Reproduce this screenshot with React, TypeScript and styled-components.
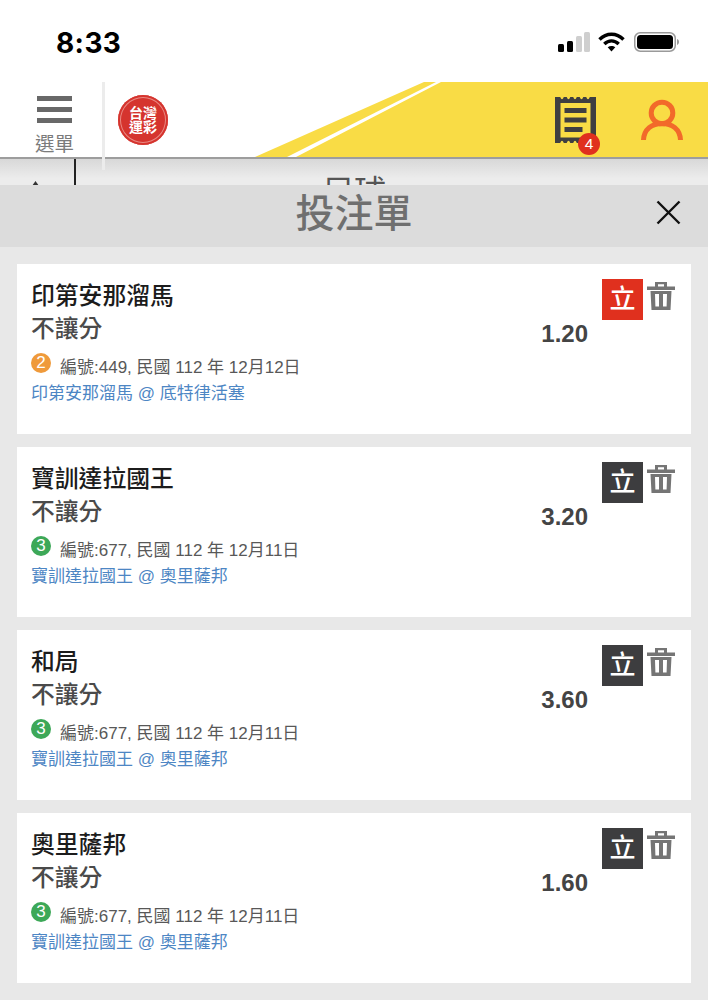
import React from "react";
import styled, { createGlobalStyle } from "styled-components";

const CJK = `"Liberation Sans", "Noto Sans CJK TC", sans-serif`;

const Global = createGlobalStyle`
  html, body { margin: 0; padding: 0; background: #e8e8e8; overflow: hidden; }
  * { box-sizing: border-box; }
  body { font-family: ${CJK}; }
`;

const Page = styled.div`
  width: 708px;
  height: 1000px;
  display: flex;
  flex-direction: column;
  position: relative;
  overflow: hidden;
`;

const StatusBar = styled.div`
  height: 82px;
  background: #fff;
  display: flex;
  justify-content: space-between;
  align-items: flex-start;
  padding: 26px 29px 0 56px;
`;

const Clock = styled.span`
  font-family: Inter, sans-serif;
  font-weight: 700;
  font-size: 28px;
  line-height: 34px;
  color: #000;
  letter-spacing: 0.4px;
`;

const StatusIcons = styled.div`
  display: flex;
  align-items: center;
  gap: 8px;
  margin-top: 6px;
`;

const Header = styled.header`
  height: 77px;
  background: #fff;
  border-bottom: 2px solid #9d9d9d;
  display: flex;
  align-items: flex-start;
  position: relative;
`;

const HeaderArt = styled.svg`
  position: absolute;
  left: 0;
  top: 0;
`;

const MenuButton = styled.div`
  width: 103px;
  display: flex;
  flex-direction: column;
  align-items: center;
  padding: 14px 0 0 6px;
  position: relative;
`;

const MenuBars = styled.div`
  width: 35px;
  display: flex;
  flex-direction: column;
  gap: 6.5px;
`;

const MenuBar = styled.span`
  height: 4.5px;
  background: #686868;
`;

const MenuLabel = styled.span`
  font-size: 19.5px;
  line-height: 24px;
  color: #7b7b7b;
  margin-top: 9px;
  white-space: nowrap;
`;

const Divider = styled.div`
  position: absolute;
  left: 102px;
  top: 0;
  width: 3px;
  height: 88px;
  background: #ececec;
  z-index: 2;
`;

const Logo = styled.div`
  width: 50px;
  height: 50px;
  margin: 13px 0 0 15px;
  border-radius: 50%;
  background: #d5342e;
  box-shadow: inset 0 0 0 2px #d5342e, inset 0 0 0 3px #e98a84;
  display: grid;
  grid-template-columns: 14px 14px;
  grid-auto-rows: 14px;
  justify-content: center;
  align-content: center;
  position: relative;
  color: #fff;
  font-size: 14px;
  font-weight: 700;
  line-height: 14px;
  text-align: center;
`;

const HeaderActions = styled.div`
  margin-left: auto;
  display: flex;
  align-items: flex-start;
  position: relative;
  padding: 15px 24px 0 0;
  gap: 44px;
`;

const ReceiptWrap = styled.div`
  position: relative;
  width: 41px;
  height: 46px;
`;

const Badge = styled.span`
  position: absolute;
  left: 23px;
  top: 36px;
  width: 22px;
  height: 22px;
  border-radius: 50%;
  background: #e0301e;
  color: #fff;
  font-size: 15.5px;
  line-height: 22px;
  text-align: center;
`;

const Backdrop = styled.div`
  height: 26px;
  overflow: hidden;
  position: relative;
  background: linear-gradient(#d8d8d8, #ececec 75%);
  display: flex;
  align-items: flex-start;
`;

const BackArrow = styled.span`
  width: 76px;
  height: 26px;
  border-right: 2px solid #222;
  padding: 22px 0 0 32px;
  display: flex;
`;

const BackdropTitle = styled.span`
  flex: 1;
  text-align: center;
  font-size: 32px;
  line-height: 40px;
  padding: 13px 76px 0 0;
  color: #555;
`;

const TitleBar = styled.div`
  height: 62px;
  background: #dcdcdc;
  display: flex;
  align-items: center;
  justify-content: center;
  position: relative;
  padding-bottom: 4px;
`;

const Title = styled.h1`
  margin: 0;
  font-size: 39px;
  line-height: 54px;
  font-weight: 500;
  letter-spacing: 0;
  color: #6f6f6f;
`;

const CloseButton = styled.div`
  position: absolute;
  right: 27px;
  top: 15px;
  width: 25px;
  height: 25px;
`;

const List = styled.div`
  flex: 1;
  background: #e8e8e8;
  padding: 17px 17px 0;
  display: flex;
  flex-direction: column;
  gap: 13px;
`;

const Card = styled.article`
  height: 170px;
  background: #fff;
  display: flex;
  align-items: flex-start;
  padding: 15px 16px 0 14px;
`;

const CardMain = styled.div`
  flex: 1;
  min-width: 0;
`;

const Team = styled.div`
  font-size: 23.8px;
  line-height: 34px;
  font-weight: 500;
  color: #1c1c1c;
`;

const Market = styled.div`
  font-size: 23.8px;
  line-height: 31px;
  font-weight: 500;
  color: #4a4a4a;
`;

const MetaRow = styled.div`
  display: flex;
  align-items: flex-start;
  margin-top: 9px;
  height: 28px;
`;

const Stage = styled.span<{ $color: string }>`
  width: 20px;
  height: 20px;
  border-radius: 50%;
  background: ${(p) => p.$color};
  color: #fff;
  font-size: 17px;
  line-height: 20px;
  text-align: center;
  margin-right: 9px;
`;

const Meta = styled.span`
  font-size: 17px;
  line-height: 30px;
  color: #585858;
`;

const Fixture = styled.div`
  font-size: 17px;
  line-height: 26px;
  color: #4d86c4;
`;

const Odds = styled.div`
  font-size: 24px;
  line-height: 28px;
  font-weight: 700;
  color: #444;
  margin: 41px -1px 0 1px;
`;

const Actions = styled.div`
  display: flex;
  align-items: flex-start;
  gap: 4px;
  margin: 0 0 0 15px;
`;

const Tag = styled.span<{ $live: boolean }>`
  width: 41px;
  height: 41px;
  background: ${(p) => (p.$live ? "#e0301e" : "#3d3d3f")};
  color: #fff;
  font-size: 26px;
  line-height: 41px;
  text-align: center;
  font-weight: 500;
`;

const Signal = () => (
  <svg width="32" height="20" viewBox="0 0 32 20">
    <rect x="0" y="12" width="6" height="8" rx="1.5" fill="#000" />
    <rect x="9" y="9" width="6" height="11" rx="1.5" fill="#000" />
    <rect x="18" y="4" width="6" height="16" rx="1.5" fill="#cfcfcf" />
    <rect x="26" y="0" width="6" height="20" rx="1.5" fill="#cfcfcf" />
  </svg>
);

const Wifi = () => (
  <svg width="27" height="20" viewBox="0 0 27 20" fill="none" stroke="#000" strokeWidth="3.4">
    <path d="M1.5 7.5C8.5 .4 18.5 .4 25.5 7.5" />
    <path d="M6.3 12C10.5 7.8 16.5 7.8 20.7 12" />
    <path d="M13.5 19.5l-3.8-4.2c2.2-1.8 5.4-1.800 7.6 0z" fill="#000" stroke="none" />
  </svg>
);

const Battery = () => (
  <svg width="46" height="20" viewBox="-1 0 46 20">
    <rect x="0.75" y="0.75" width="40.5" height="18.5" rx="5.5" fill="#fff" stroke="#9a9a9a" strokeWidth="1.5" />
    <rect x="3" y="3" width="36" height="14" rx="3.5" fill="#000" />
    <path d="M43 7c1.3.4 2 1.6 2 3s-.7 2.6-2 3z" fill="#9a9a9a" />
  </svg>
);

const NOTCHES = [7, 13.5, 20, 26.5, 33];
const topEdge = NOTCHES.map((x) => `L${x - 1.8} 0Q${x} 4.500 ${x + 1.8} 0`).join("");
const bottomEdge = [...NOTCHES].reverse().map((x) => `L${x + 1.8} 46Q${x} 41.500 ${x - 1.8} 46`).join("");
const receiptPath = `M0 0${topEdge}L41 0L41 46${bottomEdge}L0 46ZM5.500 6V40.500H35.500V6Z`;

const ReceiptIcon = () => (
  <svg width="41" height="46" viewBox="0 0 41 46">
    <path fillRule="evenodd" fill="#3f3f41" d={receiptPath} />
    <rect x="9.500" y="11" width="22" height="5" fill="#3f3f41" />
    <rect x="9.500" y="20.500" width="22" height="5" fill="#3f3f41" />
    <rect x="9.500" y="30" width="18" height="5" fill="#3f3f41" />
  </svg>
);

const PersonIcon = () => (
  <svg width="44" height="45" viewBox="0 0 44 45" fill="none" stroke="#f26a2a" strokeWidth="5">
    <circle cx="22" cy="16" r="10.800" />
    <path d="M3.500 43C4 32 12 26.500 22 26.500S40 32 40.500 43" />
  </svg>
);

const CloseIcon = () => (
  <svg width="25" height="25" viewBox="0 0 25 25" stroke="#111" strokeWidth="2.400" fill="none">
    <path d="M1.500 1.500l22 22M23.500 1.500l-22 22" />
  </svg>
);

const TrashIcon = () => (
  <svg width="28" height="28" viewBox="0 0 28 28" style={{ marginTop: 3 }}>
    <path
      fill="#757575"
      fillRule="evenodd"
      d="M8 0h12v4.500h8v3.500H0V4.500h8zm3 2.200v2.300h6V2.200zM3.500 9h21l-1 19H4.500zM8 12l.4 12.500H12V12zm8 0v12.500h3.600L20 12z"
    />
  </svg>
);

const ArrowTip = () => (
  <svg width="7" height="5" viewBox="0 0 7 5">
    <path d="M3.500 0L7 5H0z" fill="#333" />
  </svg>
);

type Bet = {
  team: string;
  odds: string;
  stage: string;
  color: string;
  meta: string;
  fixture: string;
  live: boolean;
};

const bets: Bet[] = [
  { team: "印第安那溜馬", odds: "1.20", stage: "2", color: "#ef9a3b", meta: "編號:449, 民國 112 年 12月12日", fixture: "印第安那溜馬 @ 底特律活塞", live: true },
  { team: "寶訓達拉國王", odds: "3.20", stage: "3", color: "#3da858", meta: "編號:677, 民國 112 年 12月11日", fixture: "寶訓達拉國王 @ 奧里薩邦", live: false },
  { team: "和局", odds: "3.60", stage: "3", color: "#3da858", meta: "編號:677, 民國 112 年 12月11日", fixture: "寶訓達拉國王 @ 奧里薩邦", live: false },
  { team: "奧里薩邦", odds: "1.60", stage: "3", color: "#3da858", meta: "編號:677, 民國 112 年 12月11日", fixture: "寶訓達拉國王 @ 奧里薩邦", live: false },
];

export default function App() {
  return (
    <Page>
      <Global />
      <StatusBar>
        <Clock>8:33</Clock>
        <StatusIcons>
          <Signal />
          <Wifi />
          <Battery />
        </StatusIcons>
      </StatusBar>
      <Header>
        <HeaderArt width="708" height="75" viewBox="0 0 708 75">
          <polygon points="255,75 424,0 708,0 708,75" fill="#f9dc45" />
          <polygon points="287,75 296,75 441,0 436,0" fill="#fff" />
        </HeaderArt>
        <MenuButton>
          <MenuBars>
            <MenuBar />
            <MenuBar />
            <MenuBar />
          </MenuBars>
          <MenuLabel>選單</MenuLabel>
        </MenuButton>
        <Divider />
        <Logo>
          <span>台</span>
          <span>灣</span>
          <span>運</span>
          <span>彩</span>
        </Logo>
        <HeaderActions>
          <ReceiptWrap>
            <ReceiptIcon />
            <Badge>4</Badge>
          </ReceiptWrap>
          <PersonIcon />
        </HeaderActions>
      </Header>
      <Backdrop>
        <BackArrow>
          <ArrowTip />
        </BackArrow>
        <BackdropTitle>足球</BackdropTitle>
      </Backdrop>
      <TitleBar>
        <Title>投注單</Title>
        <CloseButton>
          <CloseIcon />
        </CloseButton>
      </TitleBar>
      <List>
        {bets.map((b) => (
          <Card key={b.team}>
            <CardMain>
              <Team>{b.team}</Team>
              <Market>不讓分</Market>
              <MetaRow>
                <Stage $color={b.color}>{b.stage}</Stage>
                <Meta>{b.meta}</Meta>
              </MetaRow>
              <Fixture>{b.fixture}</Fixture>
            </CardMain>
            <Odds>{b.odds}</Odds>
            <Actions>
              <Tag $live={b.live}>立</Tag>
              <TrashIcon />
            </Actions>
          </Card>
        ))}
      </List>
    </Page>
  );
}
